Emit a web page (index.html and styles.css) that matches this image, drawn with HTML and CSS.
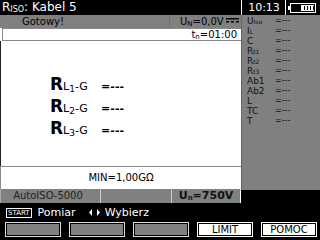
FILE: index.html
```html
<!DOCTYPE html>
<html>
<head>
<meta charset="utf-8">
<link rel="stylesheet" href="styles.css">
</head>
<body>
<div class="screen">
  <div class="topbar">
    <div class="title">R<span class="sub">ISO</span>: Kabel 5</div>
    <div class="clock">10:13</div>
    <div class="batt">
      <svg width="28" height="10" viewBox="0 0 28 10">
        <rect x="0" y="3" width="2" height="4" fill="#fff"/>
        <rect x="2.5" y="0.5" width="25" height="9" fill="#000" stroke="#fff"/>
        <rect x="4" y="2" width="8" height="6" fill="#000"/>
        <rect x="13" y="2" width="13" height="6" fill="#fff"/>
        <rect x="16" y="3" width="1" height="4" fill="#000"/>
        <rect x="19" y="3" width="1" height="4" fill="#000"/>
        <rect x="22" y="3" width="1" height="4" fill="#000"/>
        <rect x="25" y="3" width="1" height="4" fill="#000"/>
      </svg>
    </div>
  </div>
  <div class="body">
    <div class="left">
      <div class="status">
        <div class="st-msg">Gotowy!</div>
        <div class="st-u">U<span class="sub">N</span>=0,0V<svg class="dc" width="13" height="6" viewBox="0 0 13 6"><rect x="0" y="0" width="13" height="1.5" fill="#000"/><rect x="0" y="3" width="3" height="1.5" fill="#000"/><rect x="5" y="3" width="3" height="1.5" fill="#000"/><rect x="10" y="3" width="3" height="1.5" fill="#000"/></svg></div>
      </div>
      <div class="tbox">t<span class="sub">n</span>=01:00</div>
      <div class="main">
        <div class="res"><span class="rbig">R</span><span class="rsub">L<span class="idx">1</span>-G</span><span class="rval">=---</span></div>
        <div class="res"><span class="rbig">R</span><span class="rsub">L<span class="idx">2</span>-G</span><span class="rval">=---</span></div>
        <div class="res"><span class="rbig">R</span><span class="rsub">L<span class="idx">3</span>-G</span><span class="rval">=---</span></div>
      </div>
      <div class="min">MIN=1,00GΩ</div>
      <div class="foot">
        <div class="f1">AutoISO-5000</div>
        <div class="f2"></div>
        <div class="f3">U<span class="sub">n</span>=750V</div>
      </div>
    </div>
    <div class="side">
      <div class="list">
        <div class="it"><span class="lb">U<span class="sub">Iso</span></span><span class="vl">=---</span></div>
        <div class="it"><span class="lb">I<span class="sub">L</span></span><span class="vl">=---</span></div>
        <div class="it"><span class="lb">C</span><span class="vl">=---</span></div>
        <div class="it"><span class="lb">R<span class="sub">t1</span></span><span class="vl">=---</span></div>
        <div class="it"><span class="lb">R<span class="sub">t2</span></span><span class="vl">=---</span></div>
        <div class="it"><span class="lb">R<span class="sub">t3</span></span><span class="vl">=---</span></div>
        <div class="it"><span class="lb">Ab1</span><span class="vl">=---</span></div>
        <div class="it"><span class="lb">Ab2</span><span class="vl">=---</span></div>
        <div class="it"><span class="lb">L</span><span class="vl">=---</span></div>
        <div class="it"><span class="lb">TC</span><span class="vl">=---</span></div>
        <div class="it"><span class="lb">T</span><span class="vl">=---</span></div>
      </div>
    </div>
  </div>
  <div class="hint">
    <span class="startkey">START</span><span class="htxt">Pomiar</span>
    <span class="arrows"><svg width="11" height="7" viewBox="0 0 11 7"><polygon points="3,0 3,7 0,3.5" fill="#fff"/><polygon points="8,0 8,7 11,3.5" fill="#fff"/></svg></span><span class="htxt">Wybierz</span>
  </div>
  <div class="keys">
    <div class="key gray"></div>
    <div class="key gray"></div>
    <div class="key gray"></div>
    <div class="key white">LIMIT</div>
    <div class="key white">POMOC</div>
  </div>
</div>
</body>
</html>
```

FILE: styles.css
```css
* { box-sizing: border-box; }
html, body { margin: 0; padding: 0; background: #000; }
body { font-family: "DejaVu Sans", "Liberation Sans", sans-serif; font-size: 10px; }
.screen { width: 320px; height: 240px; background: #000; display: flex; flex-direction: column; overflow: hidden; }
.sub { font-size: 7px; line-height: 0; vertical-align: -1px; }

.topbar { height: 15px; display: flex; color: #fff; }
.title { width: 242px; border-right: 1px solid #fff; padding-left: 2px; font-size: 12px; line-height: 15px; }
.title .sub { font-size: 8px; vertical-align: -1px; }
.clock { width: 44px; border-right: 1px solid #fff; text-align: center; font-size: 11px; line-height: 15px; padding-left: 1px; }
.batt { flex: 1; display: flex; align-items: center; padding-left: 2px; }
.batt svg { display: block; }

.body { height: 188px; display: flex; }
.left { width: 241px; display: flex; flex-direction: column; background: #fff; }
.status { height: 13px; background: #808080; display: flex; color: #000; line-height: 13px; }
.st-msg { width: 170px; padding-left: 22px; border-right: 1px solid #6e6e6e; }
.st-u { flex: 1; padding-left: 10px; white-space: nowrap; }
.dc { margin-left: 2px; vertical-align: 1px; }
.tbox { height: 13px; margin-left: 2px; border: 1px solid #8a8a8a; border-right: 0; background: #fff; text-align: right; padding-right: 4px; line-height: 11px; color: #000; }
.main { flex: 1; background: #fff; border-left: 1px solid #222; padding-top: 32px; padding-left: 49px; }
.res { height: 22px; display: flex; align-items: baseline; color: #000; }
.rbig { font-weight: bold; font-size: 17px; line-height: 22px; }
.rsub { font-size: 11px; width: 38px; }
.idx { font-size: 9px; line-height: 0; vertical-align: -2px; }
.rval { font-weight: bold; font-size: 11px; }
.min { height: 23px; border-top: 1px solid #8a8a8a; border-left: 1px solid #8a8a8a; background: #fff; text-align: center; line-height: 21px; color: #000; }
.foot { height: 14px; background: #808080; display: flex; line-height: 13px; color: #222; }
.f1 { width: 101px; text-align: center; padding-right: 5px; border-right: 1px solid #ccc; border-left: 1px solid #aaa; }
.f2 { width: 71px; border-right: 1px solid #ccc; }
.f3 { flex: 1; font-weight: bold; font-size: 11px; text-align: center; color: #111; border-right: 1px solid #fff; }

.side { width: 79px; background: #000; }
.list { height: 175px; background: #808080; padding-top: 1px; padding-left: 5px; border-left: 1px solid #666; }
.it { height: 10px; line-height: 10px; display: flex; color: #111; font-size: 9px; }
.lb { width: 28px; }
.it .sub { font-size: 6px; vertical-align: 0; }
.vl { font-size: 8px; }

.hint { height: 19px; display: flex; align-items: center; color: #fff; padding-left: 6px; font-size: 11px; }
.startkey { border: 1px solid #fff; font-size: 7px; line-height: 8px; padding: 0 1px; margin-right: 6px; }
.htxt { margin-right: 13px; }
.arrows { display: flex; align-items: center; margin-right: 5px; }
.arrows svg { display: block; }

.keys { height: 15px; display: grid; grid-template-columns: repeat(5, 56px); gap: 8px; padding-left: 5px; }
.key { border: 1px solid #ddd; display: flex; align-items: center; justify-content: center; color: #000; font-size: 10px; }
.key.gray { background: #808080; box-shadow: inset 0 0 0 1px #000; }
.key.white { background: #fff; border-color: #fff; box-shadow: inset 0 0 0 1px #000; }
```
